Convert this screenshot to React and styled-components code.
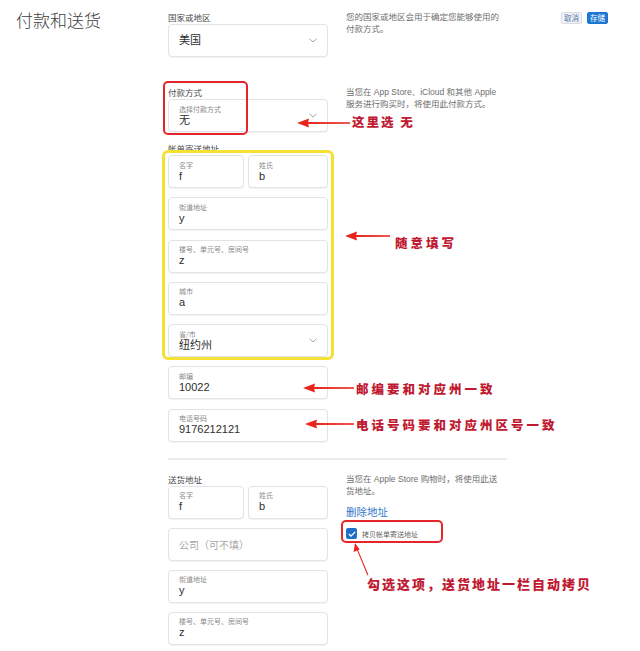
import React from "react";
import styled, { createGlobalStyle } from "styled-components";

const GlobalStyle = createGlobalStyle`
  html, body { margin: 0; padding: 0; background: #fff; }
  body { font-family: "Liberation Sans", "Noto Sans CJK SC", sans-serif; }
  * { box-sizing: border-box; }
`;

const Page = styled.div`
  position: relative;
  width: 640px;
  height: 651px;
  overflow: hidden;
  display: flex;
  background: #fff;
`;

const TitleCol = styled.div`
  width: 168px;
  flex: none;
  padding: 9px 0 0 16px;
`;

const Title = styled.h1`
  margin: 0;
  font-family: "Noto Sans CJK SC", sans-serif;
  font-size: 17px;
  line-height: 22px;
  font-weight: 300;
  color: #3d3d3d;
`;

const Main = styled.div`
  flex: 1;
  display: flex;
  flex-direction: column;
  padding: 11px 32px 0 0;
`;

const Section = styled.div`
  display: flex;
  gap: 18px;
  margin-top: ${(p) => p.$mt || 0}px;
`;

const FormCol = styled.div`
  width: 160px;
  flex: none;
  display: flex;
  flex-direction: column;
  gap: ${(p) => p.$gap || 0}px;
`;

const Label = styled.div`
  font-family: "Noto Sans CJK SC", sans-serif;
  font-size: 8.5px;
  line-height: 13px;
  height: 13px;
  color: #4a4a4a;
`;

const FieldRow = styled.div`
  display: flex;
  gap: 4px;
`;

const Field = styled.div`
  position: relative;
  flex: ${(p) => p.$flex || "none"};
  width: ${(p) => (p.$flex ? "auto" : "100%")};
  height: 33px;
  border: 1px solid #e3e3e3;
  border-radius: 4px;
  background: #fff;
  box-shadow: 0 1px 1px rgba(0, 0, 0, 0.05);
  display: flex;
  align-items: center;
  justify-content: space-between;
  padding: 0 10px 0 10px;
`;

const FieldContent = styled.div`
  display: flex;
  flex-direction: column;
`;

const FieldLabel = styled.div`
  font-family: "Noto Sans CJK SC", sans-serif;
  font-size: 7px;
  line-height: 9px;
  color: #8a8a8a;
`;

const FieldValue = styled.div`
  font-size: 11px;
  line-height: 13px;
  color: #2e2e2e;
`;

const Placeholder = styled.div`
  font-family: "Noto Sans CJK SC", sans-serif;
  font-size: 10px;
  line-height: 13px;
  color: #a8a8a8;
`;

const Desc = styled.div`
  width: 170px;
  flex: none;
  font-size: 8.5px;
  line-height: 12px;
  color: #6e6e6e;
  white-space: nowrap;
`;

const DescCol = styled.div`
  display: flex;
  flex-direction: column;
`;

const Actions = styled.div`
  margin-left: auto;
  margin-top: 1px;
  display: flex;
  gap: 5px;
  height: 12px;
`;

const SmallButton = styled.button`
  height: 12px;
  padding: 0 2px;
  font-family: "Noto Sans CJK SC", sans-serif;
  font-size: 7.5px;
  line-height: 10px;
  border-radius: 2px;
  border: 1px solid ${(p) => (p.$primary ? "#1b73cf" : "#d9dde3")};
  background: ${(p) => (p.$primary ? "#1f78d4" : "#f1f3f6")};
  color: ${(p) => (p.$primary ? "#fff" : "#5077aa")};
  cursor: pointer;
`;

const Divider = styled.div`
  width: 339px;
  height: 2px;
  background: #ececec;
  margin-top: 16px;
`;

const LinkText = styled.a`
  margin-top: 8px;
  font-family: "Noto Sans CJK SC", sans-serif;
  font-size: 10.5px;
  line-height: 14px;
  color: #3377c8;
  text-decoration: none;
`;

const CheckRow = styled.label`
  margin-top: 8px;
  display: flex;
  align-items: center;
  gap: 5px;
  height: 14px;
`;

const CheckBox = styled.span`
  width: 11px;
  height: 11px;
  border-radius: 2px;
  background: #1f6fc6;
  display: inline-flex;
  align-items: center;
  justify-content: center;
`;

const CheckLabel = styled.span`
  font-family: "Noto Sans CJK SC", sans-serif;
  font-size: 7px;
  color: #666;
`;

/* ---- overlay annotations ---- */
const Frame = styled.div`
  position: absolute;
  left: ${(p) => p.$x}px;
  top: ${(p) => p.$y}px;
  width: ${(p) => p.$w}px;
  height: ${(p) => p.$h}px;
  border: ${(p) => p.$bw || 2.5}px solid ${(p) => p.$color};
  border-radius: ${(p) => p.$r || 5}px;
  pointer-events: none;
`;

const Note = styled.div`
  position: absolute;
  left: ${(p) => p.$x}px;
  top: ${(p) => p.$y}px;
  font-family: "Noto Sans CJK SC", sans-serif;
  font-weight: 900;
  font-size: ${(p) => p.$size || 12.5}px;
  line-height: 14px;
  letter-spacing: ${(p) => p.$ls || 3}px;
  color: #bf1a32;
  white-space: nowrap;
`;

const ArrowSvg = styled.svg`
  position: absolute;
  left: ${(p) => p.$x}px;
  top: ${(p) => p.$y - 6}px;
  overflow: visible;
`;

const LeftArrow = ({ x, y, len }) => (
  <ArrowSvg $x={x} $y={y} width={len} height={12} viewBox={`0 0 ${len} 12`}>
    <polygon points="0,6 12,1.5 11,6 12,10.5" fill="#e8241d" />
    <polygon points={`10,4.9 ${len},5.3 ${len},6.7 10,7.1`} fill="#e8241d" />
  </ArrowSvg>
);

const DiagSvg = styled.svg`
  position: absolute;
  left: 350px;
  top: 541px;
  overflow: visible;
`;

const Chevron = () => (
  <svg width="8" height="5" viewBox="0 0 8 5">
    <path d="M0.5 0.8 L4 4 L7.5 0.8" fill="none" stroke="#9a9a9a" strokeWidth="0.9" />
  </svg>
);

const InputField = ({ label, value, flex, select }) => (
  <Field $flex={flex}>
    <FieldContent>
      {label && <FieldLabel>{label}</FieldLabel>}
      <FieldValue>{value}</FieldValue>
    </FieldContent>
    {select && <Chevron />}
  </Field>
);

export default function App() {
  return (
    <>
      <GlobalStyle />
      <Page>
        <TitleCol>
          <Title>付款和送货</Title>
        </TitleCol>
        <Main>
          <Section>
            <FormCol>
              <Label>国家或地区</Label>
              <InputField value="美国" select />
            </FormCol>
            <Desc>
              您的国家或地区会用于确定您能够使用的
              <br />
              付款方式。
            </Desc>
            <Actions>
              <SmallButton>取消</SmallButton>
              <SmallButton $primary>存储</SmallButton>
            </Actions>
          </Section>

          <Section $mt={29}>
            <FormCol>
              <Label>付款方式</Label>
              <InputField label="选择付款方式" value="无" select />
            </FormCol>
            <Desc>
              当您在 App Store、iCloud 和其他 Apple
              <br />
              服务进行购买时，将使用此付款方式。
            </Desc>
          </Section>

          <Section $mt={10}>
            <FormCol $gap={9.25}>
              <Label style={{ marginBottom: -9.25 }}>帐单寄送地址</Label>
              <FieldRow>
                <InputField label="名字" value="f" flex="0 0 76px" />
                <InputField label="姓氏" value="b" flex="1" />
              </FieldRow>
              <InputField label="街道地址" value="y" />
              <InputField label="楼号、单元号、房间号" value="z" />
              <InputField label="城市" value="a" />
              <InputField label="省/市" value="纽约州" select />
              <InputField label="邮编" value="10022" />
              <InputField label="电话号码" value="9176212121" />
            </FormCol>
          </Section>

          <Divider />

          <Section $mt={13}>
            <FormCol $gap={9}>
              <Label style={{ marginBottom: -9 }}>送货地址</Label>
              <FieldRow>
                <InputField label="名字" value="f" flex="0 0 76px" />
                <InputField label="姓氏" value="b" flex="1" />
              </FieldRow>
              <Field>
                <Placeholder>公司（可不填）</Placeholder>
              </Field>
              <InputField label="街道地址" value="y" />
              <InputField label="楼号、单元号、房间号" value="z" />
            </FormCol>
            <DescCol>
              <Desc>
                当您在 Apple Store 购物时，将使用此送
                <br />
                货地址。
              </Desc>
              <LinkText href="#">删除地址</LinkText>
              <CheckRow>
                <CheckBox>
                  <svg width="8" height="6" viewBox="0 0 8 6">
                    <path d="M0.8 3.1 L3 5 L7.2 0.9" fill="none" stroke="#fff" strokeWidth="1.3" />
                  </svg>
                </CheckBox>
                <CheckLabel>拷贝帐单寄送地址</CheckLabel>
              </CheckRow>
            </DescCol>
          </Section>
        </Main>

        {/* annotations */}
        <Frame $x={163} $y={81} $w={85} $h={54} $color="#e3262a" />
        <Frame $x={162} $y={150} $w={172} $h={210} $bw={3} $r={6} $color="#f4e134" />
        <Frame $x={341} $y={520} $w={102} $h={23} $color="#e3262a" />

        <LeftArrow x={297} y={122.5} len={53} />
        <Note $x={352} $y={115} $ls={2}>这里选&nbsp;无</Note>

        <LeftArrow x={345} y={236} len={45} />
        <Note $x={395} $y={236}>随意填写</Note>

        <LeftArrow x={303} y={388} len={51} />
        <Note $x={356} $y={382}>邮编要和对应州一致</Note>

        <LeftArrow x={305} y={424} len={49} />
        <Note $x={356} $y={418}>电话号码要和对应州区号一致</Note>

        <DiagSvg width="22" height="36" viewBox="0 0 22 36">
          <polygon points="5.5,3 18.5,34 17.5,34.4 4.6,3.4" fill="#e8241d" />
          <polygon points="5,2 3.6,11 9.6,8.5" fill="#e8241d" />
        </DiagSvg>
        <Note $x={367} $y={577} $size={13} $ls={2}>勾选这项，送货地址一栏自动拷贝</Note>
      </Page>
    </>
  );
}
